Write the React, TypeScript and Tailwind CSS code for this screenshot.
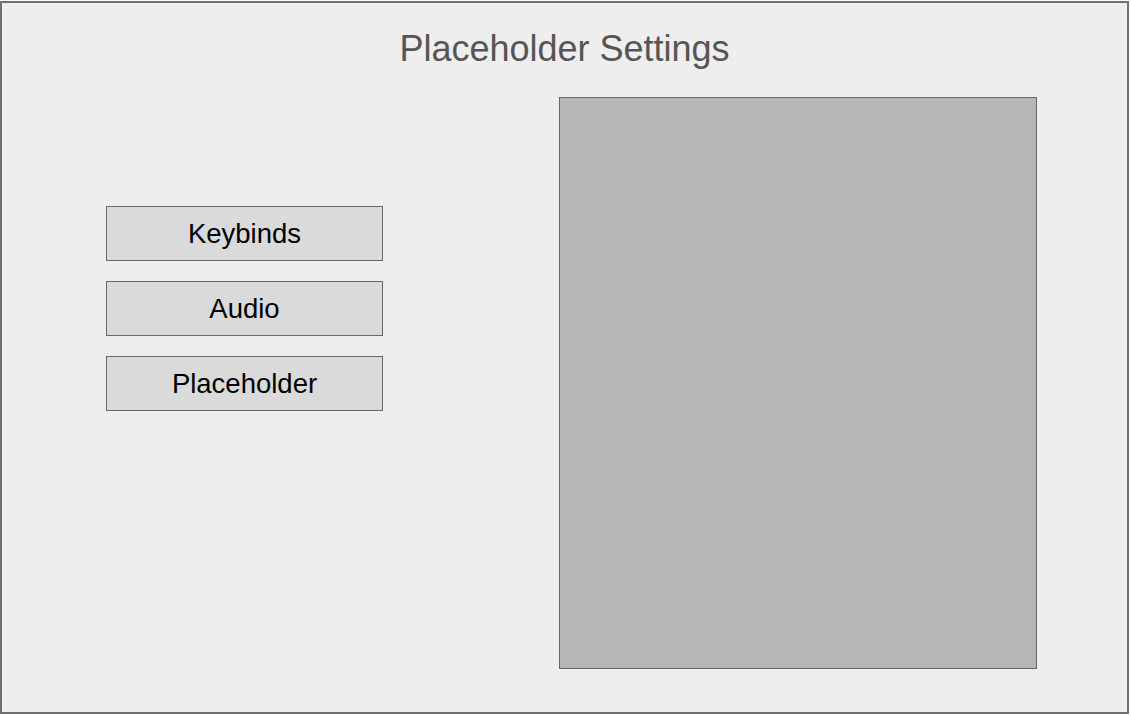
const menu = ["Keybinds", "Audio", "Placeholder"];

export default function App() {
  return (
    <div className="w-[1131px] h-[717px] bg-white pt-px font-['Liberation_Sans',Arial,sans-serif]">
      <div className="w-[1129px] h-[713px] border-2 border-[#707070] bg-[#eeeeee] flex flex-col">
        <h1 className="text-center text-[36px] leading-none text-[#555555] pt-[28px]">
          Placeholder Settings
        </h1>
        <div className="flex mt-[30px]">
          <div className="ml-[104px] mt-[109px] flex flex-col gap-[20px]">
            {menu.map((label) => (
              <button
                key={label}
                className="w-[277px] h-[55px] bg-[#dadada] border border-[#666666] text-black text-[27.5px] leading-none"
              >
                {label}
              </button>
            ))}
          </div>
          <div className="ml-[176px] w-[478px] h-[572px] bg-[#b6b6b6] border border-[#666666]" />
        </div>
      </div>
    </div>
  );
}
